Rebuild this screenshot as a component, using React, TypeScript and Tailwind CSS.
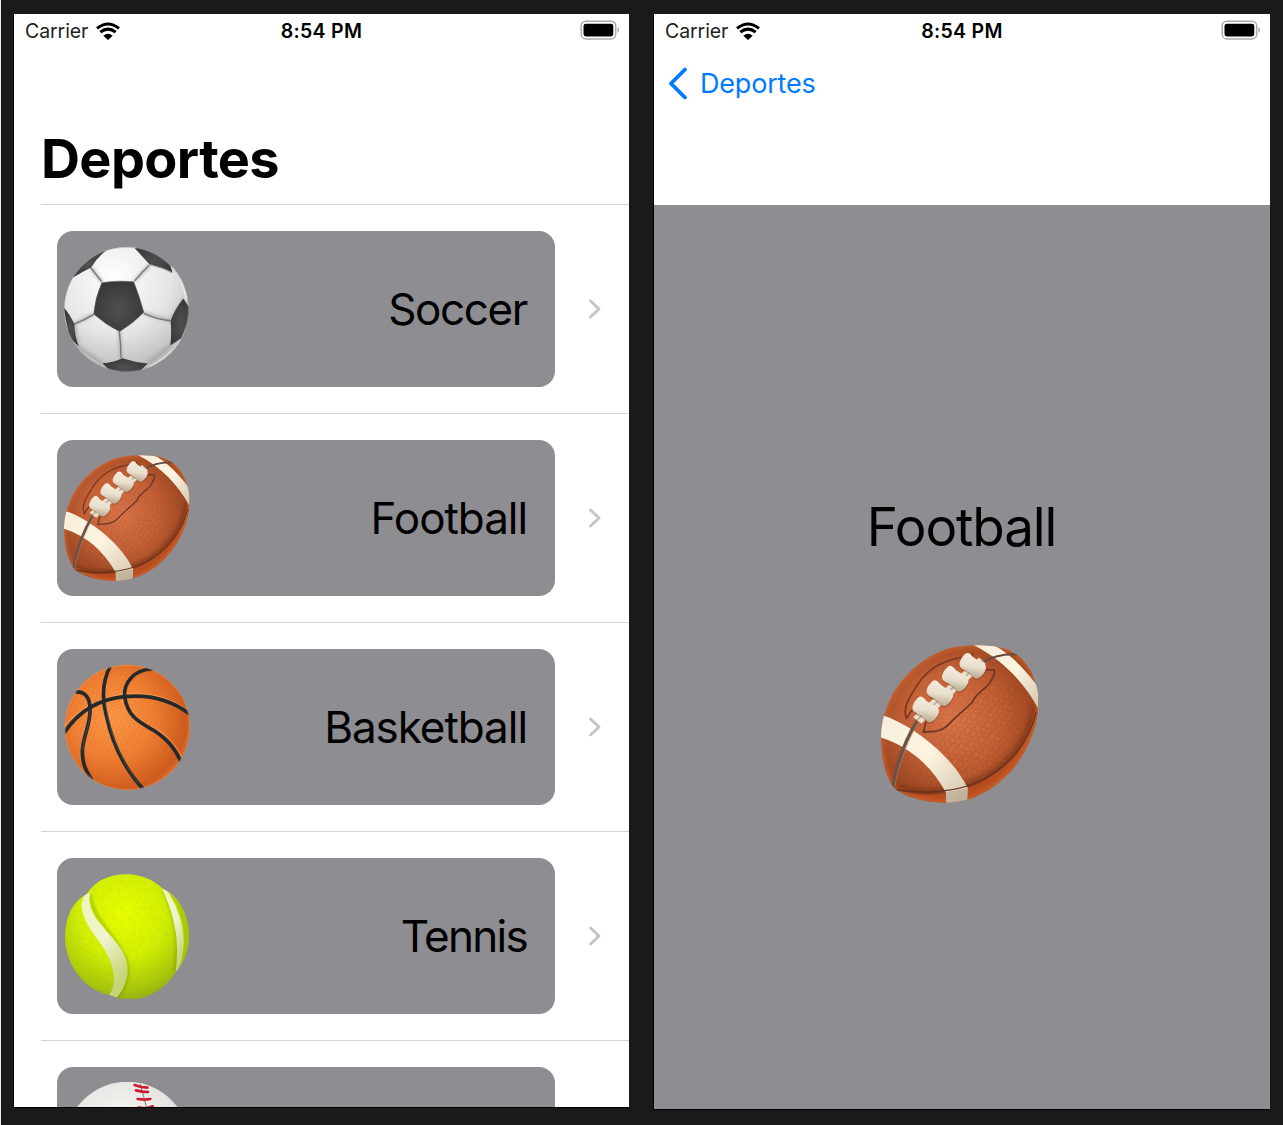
import type { ReactNode } from 'react';

function SoccerBall() {
  return (
    <svg className="block size-[126px] shrink-0" viewBox="42 63 376 376">
      <defs>
        <radialGradient id="soccerWhite" cx="0.4" cy="0.25" r="0.8">
          <stop offset="0" stopColor="#fff" />
          <stop offset="0.55" stopColor="#e6e6e6" />
          <stop offset="1" stopColor="#b4b4b4" />
        </radialGradient>
        <radialGradient id="soccerBlack" cx="0.5" cy="0.55" r="0.6">
          <stop offset="0" stopColor="#505050" />
          <stop offset="1" stopColor="#363636" />
        </radialGradient>
        <clipPath id="soccerClip"><circle cx="228.500" cy="252" r="186" /></clipPath>
        <filter id="soccerSoft" x="-20%" y="-20%" width="140%" height="140%"><feGaussianBlur stdDeviation="4" /></filter>
      </defs>
      <g clipPath="url(#soccerClip)">
        <circle cx="228" cy="252" r="188" fill="url(#soccerWhite)" />
        <g fill="none" stroke="#a2a2a2" strokeWidth="10" opacity="0.65" filter="url(#soccerSoft)">
          <path d="M122 128 L155 170 M297 120 L252 168 M131 267 L72 296 M280 264 L360 286 L399 222 M207 317 L212 398 M72 296 L84 360 L158 414 M291 414 L360 358" />
        </g>
        <g fill="none" stroke="#777" strokeWidth="4">
          <path d="M122 128 Q137 147 155 170 M297 120 Q276 140 252 168 M131 267 Q104 284 72 296 M280 264 Q318 282 360 286 M207 317 Q212 355 212 398" />
        </g>
        <path d="M155 173 Q198 165 250 170 Q267 213 280 261 Q248 294 208 318 Q168 299 131 266 Q135 217 155 173Z" fill="url(#soccerBlack)" stroke="#555" strokeWidth="2" />
        <path d="M166 78 Q142 96 123 127 Q96 140 68 158 L60 100 L120 60Z" fill="url(#soccerBlack)" />
        <path d="M253 70 Q274 92 298 119 Q337 126 366 143 L350 90 L300 60Z" fill="url(#soccerBlack)" />
        <path d="M398 220 Q372 253 360 287 Q364 326 359 360 L392 338 L425 260Z" fill="url(#soccerBlack)" />
        <path d="M40 245 Q57 262 73 296 Q74 332 86 362 L58 337Z" fill="url(#soccerBlack)" />
        <path d="M156 413 Q188 411 216 398 Q252 410 292 414 L260 445 L190 445Z" fill="url(#soccerBlack)" />
        <path d="M84 362 Q115 393 156 412 M292 414 Q334 388 361 359 M298 119 Q335 128 364 143" fill="none" stroke="#aaa" strokeWidth="3" />
        <path d="M367 126 Q398 164 407 222 M292 426 Q354 398 391 342" fill="none" stroke="#f2f2f2" strokeWidth="6" opacity="0.75" />
        <circle cx="228" cy="252" r="185" fill="none" stroke="#999" strokeWidth="3" opacity="0.5" />
      </g>
    </svg>
  );
}

const footballShape =
  'M40 279 C43 181 112 102 188 73 C227 58 296 58 332 67 C383 80 410 127 418 177 C424 242 395 319 347 369 C307 410 262 435 208 439 C153 442 99 428 70 403 C49 373 40 331 40 279Z';

const laceShape =
  'M-33 -14 Q-30 -25 -19 -22 Q-12 -19 0 -20 Q12 -21 18 -23 Q30 -23 34 -12 Q38 4 30 17 Q24 23 12 18 Q0 15 -11 18 Q-26 22 -32 10 Q-36 -2 -33 -14Z';

function Lace({ x, y }: { x: number; y: number }) {
  return (
    <g transform={`translate(${x} ${y}) rotate(34) scale(0.93 0.98)`}>
      <path d={laceShape} fill="#7a3c20" opacity="0.4" transform="translate(3 3)" />
      <path d={laceShape} fill="url(#laceFill)" />
    </g>
  );
}

function Football({ className }: { className: string }) {
  return (
    <svg className={className} viewBox="40 60 380 380">
      <defs>
        <radialGradient id="leather" gradientUnits="userSpaceOnUse" cx="215" cy="240" r="225">
          <stop offset="0" stopColor="#da754b" />
          <stop offset="0.5" stopColor="#c46137" />
          <stop offset="0.8" stopColor="#a44d27" />
          <stop offset="1" stopColor="#a0451e" />
        </radialGradient>
        <linearGradient id="stripeFill" x1="0" y1="0" x2="1" y2="1">
          <stop offset="0" stopColor="#f6eedb" />
          <stop offset="0.5" stopColor="#fdf4e0" />
          <stop offset="1" stopColor="#cfc3aa" />
        </linearGradient>
        <linearGradient id="laceFill" x1="0" y1="0" x2="0.7" y2="1">
          <stop offset="0" stopColor="#f5eee0" />
          <stop offset="0.6" stopColor="#e9dfcd" />
          <stop offset="1" stopColor="#bfb098" />
        </linearGradient>
        <pattern id="pebbles" width="26" height="30" patternUnits="userSpaceOnUse" patternTransform="rotate(-18)">
          <path d="M0 8 L6 3 L14 4 L19 0 M14 4 L17 11 L26 8 M17 11 L13 18 L4 17 L0 8 M13 18 L19 25 L26 22 L26 8 M19 25 L19 30 M4 17 L0 22 M6 3 L6 0 M19 25 L8 28 L0 22 M8 28 L6 30" fill="none" stroke="#933c1b" strokeWidth="2" />
        </pattern>
        <linearGradient id="pebbleFade" x1="0" y1="0" x2="1" y2="1">
          <stop offset="0.3" stopColor="#000" />
          <stop offset="0.55" stopColor="#fff" />
        </linearGradient>
        <mask id="pebbleMask"><rect x="40" y="60" width="380" height="380" fill="url(#pebbleFade)" /></mask>
        <clipPath id="footballClip"><path d={footballShape} /></clipPath>
        <filter id="footballBlur" x="-20%" y="-20%" width="140%" height="140%"><feGaussianBlur stdDeviation="5" /></filter>
      </defs>
      <g clipPath="url(#footballClip)">
        <path d={footballShape} fill="url(#leather)" />
        <rect x="40" y="60" width="380" height="380" fill="url(#pebbles)" opacity="0.35" mask="url(#pebbleMask)" />
        <path d="M70 403 C140 432 250 420 330 357 C380 311 407 266 417 202" fill="none" stroke="#60270f" strokeWidth="26" opacity="0.4" filter="url(#footballBlur)" />
        <path d="M68 405 C130 431 225 421 286 388 C354 350 405 287 416 204 L440 250 L350 430 L200 460Z" fill="#b74d1f" />
        <path d={footballShape} fill="none" stroke="#d6682f" strokeWidth="11" opacity="0.75" filter="url(#footballBlur)" />
        <path d="M35 228 Q48 230 61 235 C135 267 214 333 249 405 L247 445 L197 445 L196 414 C158 347 105 302 35 281Z" fill="url(#stripeFill)" />
        <path d="M263 60 L311 60 C355 83 394 127 421 165 L421 219 C388 153 333 96 263 60Z" fill="url(#stripeFill)" />
        <path d="M195 414 L249 405 L249 445 L195 445Z" fill="#8d7c68" opacity="0.3" />
        <path d="M69 401 C78 341 100 285 130 238" fill="none" stroke="#6d5046" strokeWidth="8" />
        <path d="M73 399 C83 347 104 291 132 241" fill="none" stroke="#a29182" strokeWidth="2" opacity="0.7" />
        <path d="M280 104 Q322 78 375 83" fill="none" stroke="#67483c" strokeWidth="5" />
        <path d="M71 407 C145 420 222 415 280 386 C345 354 397 295 413 222" fill="none" stroke="#64301c" strokeWidth="3" />
        <path d="M115 216 L101 236 C90 210 113 179 128 155 C151 119 190 91 260 87 M260 80 L259 92" fill="none" stroke="#793722" strokeWidth="4" />
        <path d="M289 119 L312 120 C317 132 305 143 300 153 C285 171 267 178 260 197 C242 216 225 227 206 248 C183 273 164 266 142 270 L148 245" fill="none" stroke="#6b3526" strokeWidth="4" />
        <path d="M117 234 L276 90 L292 105 L137 249Z" fill="#e9dfcc" />
        <path d="M126 241 L284 98" stroke="#b7a891" strokeWidth="4" />
        <Lace x={146} y={216} />
        <Lace x={180} y={177} />
        <Lace x={217} y={142} />
        <Lace x={259} y={111} />
      </g>
    </svg>
  );
}

function Basketball() {
  return (
    <svg className="block size-[126px] shrink-0" viewBox="41 57 378 378">
      <defs>
        <radialGradient id="rubber" cx="0.38" cy="0.42" r="0.65">
          <stop offset="0" stopColor="#ff9b4a" />
          <stop offset="0.5" stopColor="#f28234" />
          <stop offset="0.9" stopColor="#cf5c1d" />
          <stop offset="1" stopColor="#d4703a" />
        </radialGradient>
        <pattern id="grain" width="14" height="12" patternUnits="userSpaceOnUse" patternTransform="rotate(24)">
          <path d="M2 2 L7 1 L10 5 L7 8 L3 7Z M10 5 L14 6 M7 8 L8 12" fill="none" stroke="#c14e18" strokeWidth="1.3" />
        </pattern>
        <clipPath id="basketClip"><circle cx="231" cy="247" r="188" /></clipPath>
      </defs>
      <g clipPath="url(#basketClip)">
        <circle cx="231" cy="247" r="190" fill="url(#rubber)" />
        <circle cx="231" cy="247" r="190" fill="url(#grain)" opacity="0.45" />
        <g fill="none" stroke="#ffae6a" strokeWidth="3" opacity="0.65">
          <path d="M38 249 C80 194 140 160 225 147 C297 141 367 159 419 201 M232 177 C250 224 285 234 326 257 C354 273 374 299 395 336" />
        </g>
        <g fill="none" stroke="#26292a" strokeWidth="11">
          <path d="M40 266 C81 202 144 163 221 155 C298 147 362 164 418 207" />
          <path d="M180 63 C157 107 153 155 168 212 C184 287 220 370 282 436" />
          <path d="M307 72 C250 73 219 115 223 155 C232 216 267 231 310 256 C347 281 370 303 392 350" />
          <path d="M74 141 C104 138 121 158 119 199 C119 241 98 276 96 318 C96 358 108 381 125 405" />
        </g>
        <path d="M166 175 C174 252 209 347 267 418 M119 194 C120 241 99 275 97 315" fill="none" stroke="#737373" strokeWidth="2" opacity="0.6" />
        <circle cx="231" cy="247" r="187" fill="none" stroke="#eba06f" strokeWidth="4" opacity="0.45" />
      </g>
    </svg>
  );
}

function TennisBall() {
  return (
    <svg className="block size-[126px] shrink-0" viewBox="42 58 378 378">
      <defs>
        <radialGradient id="felt" cx="0.46" cy="0.33" r="0.68">
          <stop offset="0" stopColor="#e9ff00" />
          <stop offset="0.5" stopColor="#d1ef04" />
          <stop offset="0.85" stopColor="#a9c70b" />
          <stop offset="1" stopColor="#91ab17" />
        </radialGradient>
        <linearGradient id="seam" x1="0" y1="0" x2="0.5" y2="1">
          <stop offset="0" stopColor="#eff5bd" />
          <stop offset="0.55" stopColor="#f0f3cf" />
          <stop offset="1" stopColor="#c7d477" />
        </linearGradient>
        <filter id="fuzz" x="0" y="0" width="100%" height="100%">
          <feTurbulence type="fractalNoise" baseFrequency="0.09" numOctaves="2" seed="4" />
          <feColorMatrix values="0 0 0 0 0.4  0 0 0 0 0.5  0 0 0 0 0  1.6 0 0 0 -0.72" />
        </filter>
        <filter id="seamBlur" x="-20%" y="-20%" width="140%" height="140%"><feGaussianBlur stdDeviation="4" /></filter>
        <clipPath id="tennisClip">
          <path d="M110 119 C137 78 181 59 231 60 C276 61 310 77 339 103 C391 127 417 186 417 247 C416 290 401 329 375 355 C348 404 291 436 231 437 C216 436 208 434 199 429 L177 422 C99 405 45 327 45 247 C46 185 69 140 110 119Z" />
        </clipPath>
      </defs>
      <g clipPath="url(#tennisClip)" transform="translate(0 2)">
        <rect x="40" y="54" width="382" height="386" fill="url(#felt)" />
        <rect x="40" y="54" width="382" height="386" filter="url(#fuzz)" opacity="0.25" />
        <path d="M121 120 C120 190 209 253 230 318 C241 360 228 398 202 430 M343 108 C366 166 386 229 381 286 L375 354" fill="none" stroke="#718c00" strokeWidth="9" opacity="0.45" filter="url(#seamBlur)" />
        <path d="M107 120 L120 116 C108 182 169 221 209 278 C241 320 244 380 199 431 L177 422 C199 393 194 352 178 313 C158 266 117 232 100 182 C92 157 94 135 107 120Z" fill="url(#seam)" />
        <path d="M335 102 L351 110 C383 153 411 233 398 299 Q395 331 376 357 C382 325 382 285 379 245 C372 193 356 144 335 102Z" fill="url(#seam)" />
        <path d="M359 120 C400 171 415 246 393 330 L420 330 L435 170Z" fill="#9cbd04" opacity="0.45" />
      </g>
    </svg>
  );
}

function Baseball() {
  return (
    <svg className="block size-[126px] shrink-0" viewBox="192 186 378 378">
      <defs>
        <radialGradient id="hide" cx="0.45" cy="0.35" r="0.65">
          <stop offset="0" stopColor="#f7f7f4" />
          <stop offset="0.6" stopColor="#e6e6e2" />
          <stop offset="1" stopColor="#cdcdc9" />
        </radialGradient>
      </defs>
      <circle cx="382" cy="372" r="187" fill="url(#hide)" />
      <path d="M421 192 Q431 231 440 264 Q448 330 424 400" fill="none" stroke="#777" strokeWidth="3" />
      <g fill="none" stroke="#cd1830" strokeWidth="8" strokeLinecap="round">
        <path d="M404 195 L423 201 L442 203 M408 211 L426 215 L444 216 M413 237 L433 239 L451 237 M416 263 L438 265 L458 259 M418 288 L441 290 L461 284" />
      </g>
    </svg>
  );
}

function WifiIcon() {
  return (
    <svg className="mb-[1px] ml-[8px] h-[18px] w-[24px]" viewBox="288 65 72 54">
      <path d="M291 84 Q324 58 357 84 M301 95.500 Q324 77 347 95.500" fill="none" stroke="#000" strokeWidth="9" />
      <path d="M310 106 Q324 95 338 106 L324 119Z" fill="#000" />
    </svg>
  );
}

function BatteryIcon() {
  return (
    <svg className="mb-[2px] h-[20px] w-[40px]" viewBox="0 0 40 20">
      <rect x="1.200" y="1.200" width="34.500" height="17.800" rx="4.800" fill="#fff" stroke="#ababab" strokeWidth="1.500" />
      <rect x="3.500" y="3.700" width="29.800" height="12.800" rx="2.400" fill="#000" />
      <path d="M37.500 7.200 Q39.200 8 39.200 10 Q39.200 12 37.500 12.800Z" fill="#aaa" />
    </svg>
  );
}

function StatusBar() {
  return (
    <div className="grid h-[34px] shrink-0 grid-cols-3 items-center pr-[9px] pl-[11px] text-[19.500px]">
      <div className="flex items-center text-[#222]">
        <span className="pt-[2px] tracking-[-0.080px]">Carrier</span>
        <WifiIcon />
      </div>
      <div className="pt-[2px] pr-[2px] text-center font-semibold tracking-[0.300px] text-black">8:54 PM</div>
      <div className="flex justify-end"><BatteryIcon /></div>
    </div>
  );
}

function SportRow({ name, tracking, ball }: { name: string; tracking: string; ball: ReactNode }) {
  return (
    <li className="ml-[27px] flex h-[209px] shrink-0 items-center border-t border-[#d4d4d6] pl-4">
      <div className="flex h-[156px] w-[498px] items-center justify-between rounded-[16px] bg-[#8e8d92] pr-[28px] pl-[7px]">
        {ball}
        <span className={`text-[44px] leading-none ${tracking}`}>{name}</span>
      </div>
      <svg className="ml-[33px] h-[22px] w-[14px]" viewBox="0 0 14 22" fill="none">
        <path d="M2.500 3 L11 11 L2.500 19" stroke="#c4c4c6" strokeWidth="2.900" strokeLinecap="round" strokeLinejoin="round" />
      </svg>
    </li>
  );
}

export default function App() {
  return (
    <div className="h-[1125px] w-[1283px] overflow-hidden border-l border-[#ededed] bg-[#1a1a1a] font-['Inter',sans-serif] text-black">
      <div className="flex gap-[25px] pt-[14px] pl-[13px]">
        <section className="flex h-[1093px] w-[615px] flex-col overflow-hidden bg-white shadow-[-1px_1px_0_0_#000]">
          <StatusBar />
          <h1 className="flex h-[156px] shrink-0 items-end pb-[12px] pl-[27px] text-[54px] leading-[66px] font-bold tracking-[-0.640px]">Deportes</h1>
          <ul className="flex flex-col">
            <SportRow name="Soccer" tracking="tracking-[-1.400px]" ball={<SoccerBall />} />
            <SportRow name="Football" tracking="tracking-[-1.050px]" ball={<Football className="block size-[126px] shrink-0" />} />
            <SportRow name="Basketball" tracking="tracking-[-1.050px]" ball={<Basketball />} />
            <SportRow name="Tennis" tracking="tracking-[-1.700px]" ball={<TennisBall />} />
            <SportRow name="" tracking="tracking-normal" ball={<Baseball />} />
          </ul>
        </section>
        <section className="flex h-[1095px] w-[616px] flex-col overflow-hidden bg-white shadow-[-1px_1px_0_0_#000]">
          <StatusBar />
          <nav className="flex h-[157px] shrink-0 items-start pt-[18px] pl-[14px] text-[#007aff]">
            <button className="flex items-center">
              <svg className="h-[34px] w-[20px]" viewBox="0 0 20 34" fill="none">
                <path d="M17 2.500 L3 16.500 L17 30.500" stroke="currentColor" strokeWidth="3.800" strokeLinecap="round" strokeLinejoin="round" />
              </svg>
              <span className="ml-[12px] pt-[1px] text-[27px] leading-[34px] tracking-[-0.200px]">Deportes</span>
            </button>
          </nav>
          <main className="flex flex-1 flex-col items-center bg-[#8e8d92] pt-[290px]">
            <h2 className="pr-[1px] text-[53px] leading-[64px] tracking-[-1.100px]">Football</h2>
            <Football className="mt-[86px] mr-[4px] block size-[158px]" />
          </main>
        </section>
      </div>
    </div>
  );
}
